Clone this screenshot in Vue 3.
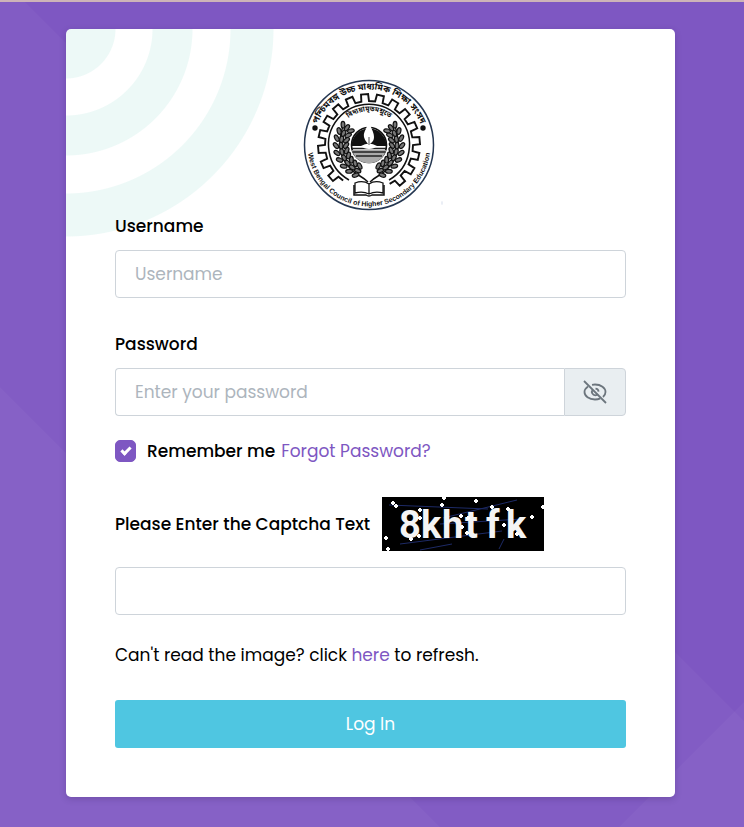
<script setup>
import { ref } from 'vue'

const username = ref('')
const password = ref('')
const captcha = ref('')
const remember = ref(true)
const showPassword = ref(false)

const polar = (r, deg) => {
  const a = (deg * Math.PI) / 180
  return `${(r * Math.sin(a)).toFixed(2)} ${(-r * Math.cos(a)).toFixed(2)}`
}

// Cog outline, left open at the bottom where the book sits
const step = 18
const gear = []
for (let a = -144; a < 144; a += step) {
  gear.push(polar(44, a), polar(44, a + 8), polar(51, a + 9), polar(51, a + 17))
}
gear.push(polar(44, 144), polar(44, 152))
const gearPath = 'M' + gear.join('L')

// Laurel leaves along each side of the lamp
const leaves = []
for (let i = 0; i < 9; i++) {
  const deg = 204 + i * 13
  const a = (deg * Math.PI) / 180
  for (const [r, tilt] of [[23, 40], [28, 0], [33, -40]]) {
    leaves.push({
      x: (r * Math.sin(a)).toFixed(2),
      y: (-r * Math.cos(a)).toFixed(2),
      rot: deg + tilt
    })
  }
}

const letters = [
  { c: '8', x: 17 },
  { c: 'k', x: 39 },
  { c: 'h', x: 60 },
  { c: 't', x: 83 },
  { c: 'f', x: 104 },
  { c: 'k', x: 124 }
]
const stars = [
  [11, 6], [14, 9], [38, 13], [62, 1], [60, 8], [94, 4], [110, 10], [126, 12],
  [161, 10], [150, 20], [38, 21], [79, 19], [86, 21], [80, 30], [85, 36],
  [122, 28], [37, 39], [29, 42], [4, 41], [6, 52], [135, 37]
]
</script>

<template>
  <div class="page">
    <svg class="backdrop" viewBox="0 0 744 827" preserveAspectRatio="xMidYMid slice" aria-hidden="true">
      <path d="M0 -24L24 0L851 827H0Z" />
      <path d="M0 386L441 827H0Z" />
      <path d="M744 701L618 827H744Z" />
    </svg>

    <main class="card">
      <svg class="logo" viewBox="-71 -67 146 136" role="img">
        <defs>
          <path id="ring-top" d="M-55.500 0A55.500 55.500 0 0 1 55.500 0" />
          <path id="ring-bottom" d="M-61 -8A61.500 61.500 0 1 0 61 -8" />
          <path id="motto" d="M-34 0A34 34 0 0 1 34 0" />
        </defs>
        <circle r="64.500" fill="#fff" stroke="#243650" stroke-width="1.500" />
        <path :d="gearPath" class="line cog" />
        <path d="M-20 35A40.500 40.500 0 1 1 20 35" class="line" />
        <circle cx="-54" cy="-17" r="2.700" />
        <circle cx="54" cy="-17" r="2.700" />
        <text class="bengali"><textPath href="#ring-top" startOffset="50%" text-anchor="middle">পশ্চিমবঙ্গ উচ্চ মাধ্যমিক শিক্ষা সংসদ</textPath></text>
        <text class="english"><textPath href="#ring-bottom" startOffset="50%" text-anchor="middle">West Bengal Council of Higher Secondary Education</textPath></text>
        <text class="motto"><textPath href="#motto" startOffset="50%" text-anchor="middle">বিদ্যয়ামৃতমশ্নুতে</textPath></text>
        <g v-for="side in [1, -1]" :key="side" :transform="`scale(${side} 1)`">
          <path d="M-1 37C-8 30 -14 30 -20 22C-29 12 -32 -5 -25 -21" class="line" />
          <ellipse v-for="(l, i) in leaves" :key="i" rx="3.400" ry="1.900" :transform="`translate(${l.x} ${l.y}) rotate(${l.rot})`" class="leaf" />
        </g>
        <circle r="17.500" fill="#fff" stroke="#111" stroke-width="1.600" />
        <path d="M-17.500 1A17.500 17.500 0 0 1 17.500 1Z" />
        <path d="M-17 5H17A17.500 17.500 0 0 1 -17 5Z" fill="#aaa" />
        <path d="M-17 3.500H17M-16 7H16M-13 11H13" stroke="#222" stroke-width="1.500" />
        <path d="M0 -26C-1 -17 -6 -14 -5 -8C-4 -4 -2 -3 -1 -1H1C3 -3 5 -4 5 -8C5 -14 1 -17 0 -26Z" fill="#fff" />
        <path d="M-8 1Q0 -4 8 1Q5 4 0 4Q-5 4 -8 1Z" fill="#fff" />
        <path d="M0 -8V0" stroke="#555" />
        <path d="M-14 38Q-6 35 0 39Q6 35 14 38V48Q6 46 0 49Q-6 46 -14 48ZM0 39V49" fill="#fff" stroke="#111" stroke-width="1.300" />
        <path d="M-15 40V50H-3Q0 52 3 50H15V40" class="line" />
        <ellipse cx="73" cy="58" rx="1" ry="2" fill="#e8edf5" />
      </svg>

      <form @submit.prevent>
        <label class="label" for="username">Username</label>
        <input id="username" v-model="username" class="field" type="text" placeholder="Username" />

        <label class="label spaced" for="password">Password</label>
        <div class="group">
          <input id="password" v-model="password" class="field" :type="showPassword ? 'text' : 'password'" placeholder="Enter your password" />
          <button class="toggle" type="button" aria-label="Show password" @click="showPassword = !showPassword">
            <svg viewBox="0 0 24 24" aria-hidden="true">
              <path d="M1 1L23 23" />
              <path d="M9 4.800C10 4.600 11 4.500 12 4.500C18 4.500 22.500 8 22.500 12C22.500 14 21.500 15.700 20 17" />
              <path d="M5 6.500C3 7.900 1.500 9.800 1.500 12C1.500 16 6 19.500 12 19.500C14 19.500 15.800 19.100 17.300 18.400" />
              <path d="M9.500 10C8 12 9.500 15.300 12.300 15.300C13.200 15.300 14.200 14.900 14.800 14.200" />
              <path d="M12.500 8.700C14.300 8.800 15.400 10 15.600 11.600" />
            </svg>
          </button>
        </div>

        <div class="remember">
          <input id="remember" v-model="remember" type="checkbox" />
          <label for="remember">Remember me</label>
          <a href="#">Forgot Password?</a>
        </div>

        <div class="captcha">
          <label for="captcha">Please Enter the Captcha Text</label>
          <svg viewBox="0 0 162 54" role="img">
            <rect width="162" height="54" />
            <path d="M7 8L106 12M61 21L135 3M18 47L120 34M38 53L70 47M117 52L122 42M58 27L140 22" class="scratch" />
            <text v-for="(l, i) in letters" :key="i" :x="l.x" y="41">{{ l.c }}</text>
            <path v-for="(s, i) in stars" :key="'s' + i" :d="`M${s[0] - 2} ${s[1]}h4m-2 -2v4`" class="star" />
          </svg>
        </div>
        <input id="captcha" v-model="captcha" class="field" type="text" />

        <p class="hint">Can't read the image? click <a href="#">here</a> to refresh.</p>
        <button class="submit" type="submit">Log In</button>
      </form>
    </main>
  </div>
</template>

<style>
body {
  margin: 0;
  background: #7e57c2;
}
</style>

<style scoped>
.page {
  position: relative;
  box-sizing: border-box;
  min-height: 100vh;
  padding: 27px 69px 30px 66px;
  border-top: 2px solid #cdb3b8;
  background: #7e57c2;
  color: #000;
  font: 400 17px/24px Poppins, Inter, sans-serif;
}
.backdrop {
  position: absolute;
  inset: 0;
  width: 100%;
  height: 100%;
  fill: rgba(255, 255, 255, 0.035);
}
.card {
  position: relative;
  box-sizing: border-box;
  max-width: 640px;
  margin: 0 auto;
  padding: 49px;
  border-radius: 5px;
  background: radial-gradient(circle at 0 0, #edf9f7 49px, #fff 50px, #fff 86px, #edf9f7 87px, #edf9f7 126px, #fff 127px, #fff 164px, #edf9f7 165px, #edf9f7 207px, #fff 208px);
  box-shadow: 0 2px 6px rgba(50, 30, 90, 0.25);
}
.logo {
  display: block;
  width: 146px;
  height: 136px;
  margin: 0 auto;
  fill: #111;
}
.line {
  fill: none;
  stroke: #111;
  stroke-width: 1.5;
}
.cog {
  stroke-width: 1.9;
}
.leaf {
  fill: #777;
  stroke: #111;
  stroke-width: 1.2;
}
.bengali {
  font: 700 9px "Noto Sans Bengali", "Noto Sans", sans-serif;
}
.english {
  font: 700 7px "Liberation Sans", sans-serif;
}
.motto {
  font: 700 7px "Noto Sans Bengali", "Noto Sans", sans-serif;
}
form {
  display: flex;
  flex-direction: column;
}
.label {
  margin-bottom: 12px;
}
.label,
.remember label,
.captcha label {
  font-weight: 500;
}
.spaced {
  margin-top: 34px;
}
.field {
  box-sizing: border-box;
  width: 100%;
  height: 48px;
  padding: 0 19px;
  border: 1px solid #ced4da;
  border-radius: 4px;
  background: #fff;
  color: #495057;
  font: inherit;
}
.field::placeholder {
  color: #adb5bd;
  opacity: 1;
}
.group {
  display: flex;
}
.group .field {
  flex: 1;
  min-width: 0;
  border-right: 0;
  border-radius: 4px 0 0 4px;
}
.toggle {
  display: grid;
  place-items: center;
  width: 62px;
  padding: 0;
  border: 1px solid #ced4da;
  border-radius: 0 4px 4px 0;
  background: #e9eef1;
}
.toggle svg {
  width: 24px;
  height: 24px;
  fill: none;
  stroke: #6c757d;
  stroke-width: 1.8;
}
.remember {
  display: flex;
  align-items: center;
  gap: 6px;
  margin-top: 23px;
}
.remember input {
  appearance: none;
  display: grid;
  place-items: center;
  width: 21px;
  height: 22px;
  margin: 0 5px 0 0;
  border: 1px solid #7e57c2;
  border-radius: 5px;
  background: #fff;
}
.remember input:checked {
  background: #7e57c2;
}
.remember input:checked::after {
  content: "";
  width: 7px;
  height: 3px;
  margin-bottom: 3px;
  border: solid #fff;
  border-width: 0 0 3px 3px;
  transform: rotate(-45deg);
}
a {
  color: #7e57c2;
  text-decoration: none;
}
.captcha {
  display: flex;
  align-items: center;
  gap: 12px;
  margin: 34px 0 16px;
}
.captcha svg {
  width: 162px;
  height: 54px;
}
.captcha text {
  fill: #f4f4f4;
  font: 700 38px Roboto, sans-serif;
}
.scratch {
  fill: none;
  stroke: #1d2a66;
}
.star {
  stroke: #fff;
  stroke-width: 2;
}
.hint {
  margin: 28px 0 33px;
}
.submit {
  height: 48px;
  border: 0;
  border-radius: 3px;
  background: #4fc6e1;
  color: #fff;
  font: inherit;
}
</style>
